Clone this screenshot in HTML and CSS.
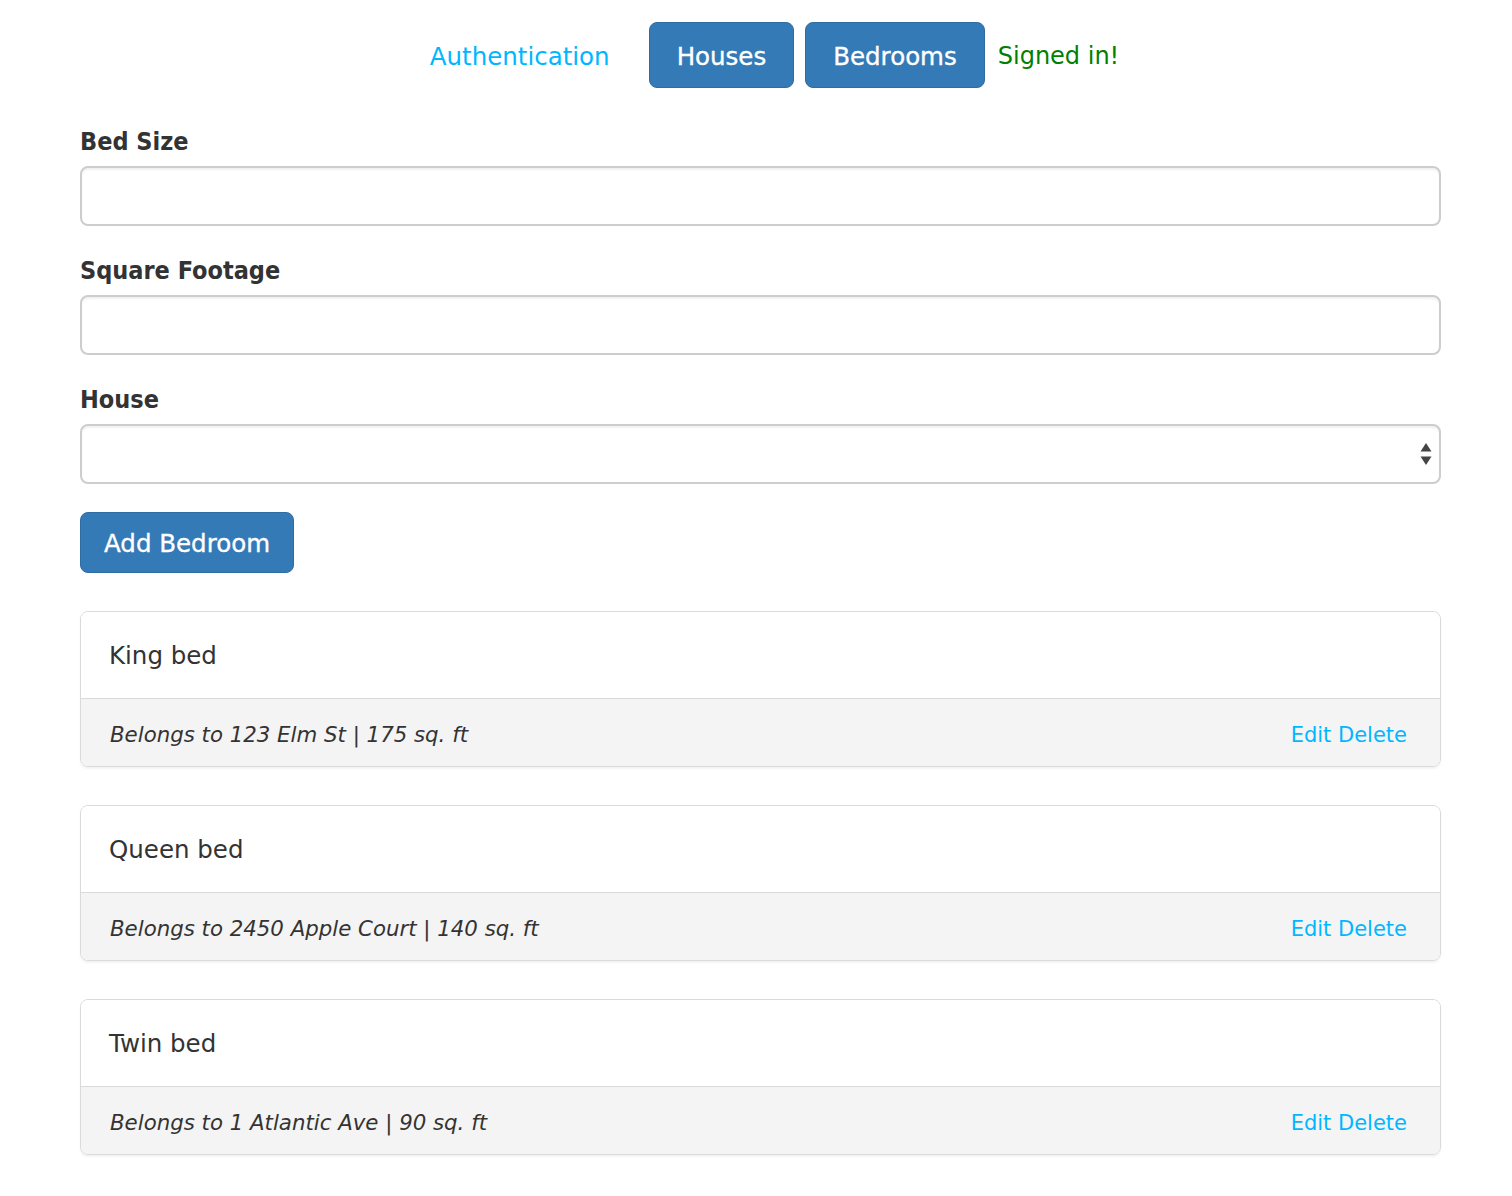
FILE: index.html
```html
<!DOCTYPE html>
<html lang="en">
<head>
<meta charset="utf-8">
<title>Bedrooms</title>
<link rel="stylesheet" href="styles.css">
</head>
<body>
<nav class="topnav">
  <a class="nav-link" href="#">Authentication</a>
  <a class="btn btn-nav" href="#">Houses</a>
  <a class="btn btn-nav btn-nav-last" href="#">Bedrooms</a>
  <span class="signed-in">Signed in!</span>
</nav>

<main class="page">
  <form class="bedroom-form">
    <div class="form-group">
      <label class="form-label" for="bed-size">Bed Size</label>
      <input class="form-control" id="bed-size" type="text">
    </div>
    <div class="form-group">
      <label class="form-label" for="sq-ft">Square Footage</label>
      <input class="form-control" id="sq-ft" type="text">
    </div>
    <div class="form-group">
      <label class="form-label" for="house">House</label>
      <div class="select-wrap">
        <select class="form-control form-select" id="house">
          <option></option>
        </select>
        <svg class="select-arrows" width="12" height="22" viewBox="0 0 12 22" aria-hidden="true">
          <path d="M6 0 L11.5 8.5 L0.5 8.5 Z" fill="#444"/>
          <path d="M6 22 L11.5 13.5 L0.5 13.5 Z" fill="#444"/>
        </svg>
      </div>
    </div>
    <button class="btn btn-submit" type="button">Add Bedroom</button>
  </form>

  <section class="bedroom-list">
    <div class="card">
      <div class="card-header">King bed</div>
      <div class="card-footer">
        <span class="card-meta">Belongs to 123 Elm St | 175 sq. ft</span>
        <span class="card-actions"><a href="#">Edit</a> <a href="#">Delete</a></span>
      </div>
    </div>
    <div class="card">
      <div class="card-header">Queen bed</div>
      <div class="card-footer">
        <span class="card-meta">Belongs to 2450 Apple Court | 140 sq. ft</span>
        <span class="card-actions"><a href="#">Edit</a> <a href="#">Delete</a></span>
      </div>
    </div>
    <div class="card">
      <div class="card-header">Twin bed</div>
      <div class="card-footer">
        <span class="card-meta">Belongs to 1 Atlantic Ave | 90 sq. ft</span>
        <span class="card-actions"><a href="#">Edit</a> <a href="#">Delete</a></span>
      </div>
    </div>
  </section>
</main>
</body>
</html>
```

FILE: styles.css
```css
* {
  box-sizing: border-box;
}

body {
  margin: 0;
  background: #fff;
  color: #333;
  font-family: "DejaVu Sans", "Liberation Sans", sans-serif;
  font-size: 24.5px;
}

a {
  text-decoration: none;
}

/* top navigation */
.topnav {
  display: flex;
  justify-content: center;
  align-items: center;
  padding-top: 22px;
  padding-left: 37px;
}

.nav-link {
  color: #00b7ff;
  margin-right: 39px;
  font-size: 24.5px;
  padding-top: 2px;
}

.btn {
  display: inline-flex;
  align-items: center;
  justify-content: center;
  background: #337ab7;
  color: #fff;
  border: 1px solid #2e6da4;
  border-radius: 8px;
  font-family: "DejaVu Sans", "Liberation Sans", sans-serif;
  font-size: 24.5px;
  -webkit-text-stroke: 0.35px #fff;
  cursor: pointer;
}

.btn-nav {
  height: 66px;
  padding: 2px 27px 0;
  margin-right: 11px;
}

.btn-nav-last {
  margin-right: 13px;
}

.signed-in {
  color: #008000;
  font-size: 24px;
  padding-top: 2px;
}

/* page */
.page {
  margin: 0 71px 0 80px;
  padding-bottom: 40px;
}

.bedroom-form {
  margin-top: 37px;
}

.form-group {
  margin-bottom: 28px;
}

.form-label {
  display: block;
  font-family: "DejaVu Sans Condensed", "DejaVu Sans", sans-serif;
  font-stretch: condensed;
  font-weight: bold;
  font-size: 25px;
  line-height: 34px;
  margin-bottom: 7px;
  color: #333;
}

.form-control {
  display: block;
  width: 100%;
  height: 60px;
  border: 2px solid #cdcdcd;
  border-radius: 8px;
  background: #fff;
  box-shadow: inset 0 2px 2px rgba(0, 0, 0, 0.06);
  font-family: inherit;
  font-size: 24px;
  padding: 0 20px;
  outline: none;
}

.select-wrap {
  position: relative;
}

.form-select {
  appearance: none;
  -webkit-appearance: none;
}

.select-arrows {
  position: absolute;
  right: 9px;
  top: 19px;
}

.btn-submit {
  height: 61px;
  padding: 1px 23px 0;
}

/* bedroom cards */
.bedroom-list {
  margin-top: 38px;
}

.card {
  border: 1px solid #dadada;
  border-radius: 8px;
  box-shadow: 0 2px 2px rgba(0, 0, 0, 0.05);
  margin-bottom: 38px;
  overflow: hidden;
}

.card-header {
  padding: 25px 28px 23px;
  line-height: 38px;
  font-size: 24.5px;
  color: #333;
  background: #fff;
}

.card-footer {
  display: flex;
  justify-content: space-between;
  align-items: center;
  border-top: 1px solid #dadada;
  background: #f4f4f4;
  padding: 20px 33px 15px 29px;
  line-height: 32px;
}

.card-meta {
  font-style: italic;
  font-size: 21.3px;
  color: #333;
}

.card-actions {
  font-size: 21px;
}

.card-actions a {
  color: #00b7ff;
}
```
